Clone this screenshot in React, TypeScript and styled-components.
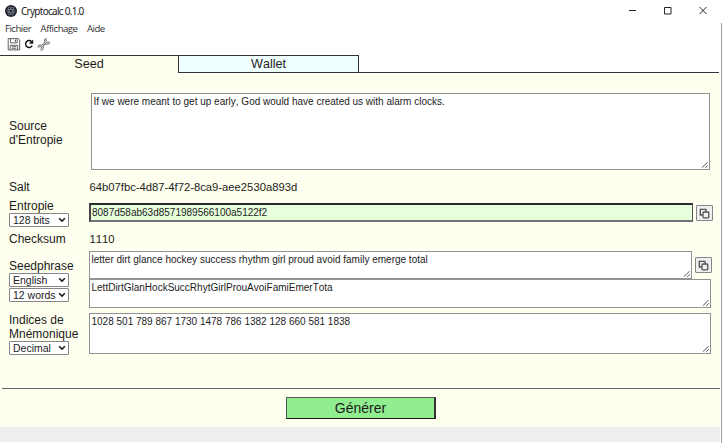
import React from "react";
import styled, { createGlobalStyle } from "styled-components";

const Global = createGlobalStyle`
  * { box-sizing: border-box; }
  body { margin: 0; background: #fff; color: #1c1c1c; font-family: "Liberation Sans", Arial, sans-serif; font-kerning: none; }
`;

const Window = styled.div`
  width: 722px;
  height: 443px;
  display: flex;
  flex-direction: column;
  background: linear-gradient(#9c9ca0, #9c9ca0) right 23px / 1px 420px no-repeat #fff;
  padding-right: 2px;
  overflow: hidden;
`;

const TitleBar = styled.header`
  height: 21px;
  display: flex;
  align-items: center;
  justify-content: space-between;
  padding: 0 13px 0 5px;
  font: 10px/20px "Noto Sans", "Open Sans", sans-serif;
`;

const Title = styled.div`
  display: flex;
  align-items: center;
  gap: 4px;
  letter-spacing: -0.73px;
  height: 20px;
`;

const WindowControls = styled.div`
  display: flex;
  gap: 27px;
  svg { display: block; }
`;

const MenuBar = styled.nav`
  height: 16px;
  display: flex;
  gap: 9.5px;
  padding-left: 5px;
  font: 9.6px/16px "Open Sans", "Noto Sans", sans-serif;
  letter-spacing: -0.5px;
  color: #333;
`;

const ToolBar = styled.div`
  height: 18px;
  display: flex;
  gap: 2px;
  padding: 1px 0 0 7px;
`;

const Tabs = styled.div`
  height: 18px;
  display: grid;
  grid-template-columns: 178px 181px 1fr;
  grid-template-rows: 18px;
  font-size: 12.6px;
  line-height: 16px;
  text-align: center;
`;

const Tab = styled.div<{ $active?: boolean }>`
  border-top: 1px solid #333338;
  background: ${(p) => (p.$active ? "#ffffef" : "#f0ffff")};
  border-left: ${(p) => (p.$active ? "0" : "1px solid #333338")};
  border-right: ${(p) => (p.$active ? "0" : "1px solid #333338")};
  border-bottom: ${(p) => (p.$active ? "0" : "1px solid #333338")};
`;

const TabRest = styled.div`
  border-bottom: 1px solid #333338;
  margin-right: 1px;
`;

const Panel = styled.main`
  flex: 0 0 315px;
  background: #ffffef;
  padding: 20px 8px 0 9px;
`;

const Row = styled.div<{ $h: number }>`
  height: ${(p) => p.$h}px;
  display: grid;
  grid-template-columns: 80px 1fr;
`;

const Label = styled.div<{ $top?: number }>`
  margin-top: ${(p) => p.$top ?? 0}px;
  font-size: 12px;
  line-height: 14px;
`;

const Value = styled.div`
  font-size: 11.25px;
  line-height: 16px;
  padding-left: 0.5px;
`;

const Fields = styled.div`
  display: flex;
  flex-direction: column;
  align-items: flex-start;
`;

const FieldLine = styled.div<{ $gap: number }>`
  display: flex;
  align-items: flex-start;
  gap: ${(p) => p.$gap}px;
`;

const Area = styled.div<{ $w: number; $h: number; $inset?: number }>`
  position: relative;
  width: ${(p) => p.$w}px;
  height: ${(p) => p.$h}px;
  margin-left: ${(p) => p.$inset ?? 0}px;
  border: 1px solid #929295;
  background: #fff;
  padding: 1.5px 1.5px;
  font-size: 10px;
  line-height: 12px;
  white-space: nowrap;
`;

const EntropyInput = styled.div`
  width: 604px;
  height: 19px;
  border: 1px solid #555558;
  border-top: 2px solid #29292d;
  border-left: 2px solid #444448;
  border-bottom: 2px solid #737373;
  background: #e8ffdc;
  font-size: 10px;
  line-height: 15px;
  padding-left: 1px;
`;

const Grip = styled.svg`
  position: absolute;
  right: 0;
  bottom: 0;
`;

const SelectBox = styled.div`
  width: 60px;
  height: 14px;
  display: flex;
  align-items: center;
  justify-content: space-between;
  border: 1px solid #85858a;
  border-radius: 1px;
  background: #fff;
  font-size: 10.5px;
  line-height: 12px;
  padding: 0 2px 0 3px;
  white-space: nowrap;
  & + & { margin-top: 1px; }
`;

const CopyBox = styled.div<{ $top: number }>`
  width: 17px;
  height: 16px;
  margin-top: ${(p) => p.$top}px;
  border: 1px solid #85858a;
  border-radius: 1px;
  background: #efefef;
  display: grid;
  place-items: center;
`;

const Footer = styled.footer`
  flex: 0 0 39px;
  background: #ffffef;
  display: flex;
  flex-direction: column;
  align-items: center;
  padding-left: 2px;
`;

const Rule = styled.div`
  width: 718px;
  height: 1px;
  background: #62656a;
`;

const Generate = styled.div`
  width: 150px;
  height: 22px;
  margin-top: 8px;
  border: 1px solid #555;
  border-right: 2px solid #333;
  border-bottom: 1px solid #161616;
  background: #90ee90;
  font-size: 14px;
  line-height: 21px;
  text-align: center;
`;

const StatusBar = styled.div`
  flex: 0 0 15px;
  background: #eee;
`;

const ElectronIcon = () => (
  <svg width="12" height="12" viewBox="0 0 12 12">
    <circle cx="6" cy="6" r="6" fill="#22242e" />
    <g fill="none" stroke="#899aa5" strokeWidth=".55">
      <ellipse cx="6" cy="6" rx="4.4" ry="1.7" />
      <ellipse cx="6" cy="6" rx="4.4" ry="1.7" transform="rotate(60 6 6)" />
      <ellipse cx="6" cy="6" rx="4.4" ry="1.7" transform="rotate(120 6 6)" />
    </g>
  </svg>
);

const SaveIcon = () => (
  <svg width="14" height="13" viewBox="0 0 14 13" fill="none" stroke="#555" strokeWidth=".9">
    <path d="M1.2.6h10.2l1.3 1.2v10.1H1.2zM3.6.6v4.2h6.6V.6M3.2 11.9V7.3h7.5v4.6M4.7 8.7h4.6M4.7 10.3h4.6" />
    <path d="M8.4 1.6v2" strokeWidth="1.3" />
  </svg>
);

const ReloadIcon = () => (
  <svg width="12" height="13" viewBox="0 0 12 13" fill="none" stroke="#171717" strokeWidth="1.5">
    <path d="M8.7 3.7A3.5 3.5 0 1 0 9.2 7.7" />
    <path d="M10.2 1.5v4.3H5.9z" fill="#171717" stroke="none" />
  </svg>
);

const wrenchPath =
  "M10 1.5A1.9 1.9 0 1 0 11.9 3.4M8.5 4.9L5.1 8.1M3.6 11.5A1.9 1.9 0 1 0 1.7 9.6";

const WrenchIcon = () => (
  <svg width="14" height="13" viewBox="0 0 14 13" fill="none">
    <path d={wrenchPath} stroke="#686868" strokeWidth="2.4" />
    <path d={wrenchPath} stroke="#eee" strokeWidth=".9" />
  </svg>
);

const CopyIcon = () => (
  <svg width="11" height="11" viewBox="0 0 11 11" fill="none" stroke="#505050" strokeWidth="1.3">
    <path d="M3.7 7H1.3V1.3H7v2.4" />
    <rect x="4" y="4" width="5.8" height="5.8" rx="1" />
  </svg>
);

const CopyButton = ({ top }: { top: number }) => (
  <CopyBox $top={top}><CopyIcon /></CopyBox>
);

const Select = ({ children }: { children: React.ReactNode }) => (
  <SelectBox>
    {children}
    <svg width="8" height="6" viewBox="0 0 8 6" fill="none" stroke="#151515" strokeWidth="1.6">
      <path d="M1.2 1.2L4 4.2l2.8-3" />
    </svg>
  </SelectBox>
);

const TextArea = ({ w, h, inset, children }: { w: number; h: number; inset?: number; children: React.ReactNode }) => (
  <Area $w={w} $h={h} $inset={inset}>
    {children}
    <Grip width="8" height="8" viewBox="0 0 8 8" fill="none" stroke="#505050" strokeWidth="1">
      <path d="M1 6.7L6.5 1.2M4.2 6.9L6.8 4.3" />
    </Grip>
  </Area>
);

export default function App() {
  return (
    <>
      <Global />
      <Window>
        <TitleBar>
          <Title><ElectronIcon />Cryptocalc 0.1.0</Title>
          <WindowControls>
            <svg width="8" height="9" viewBox="0 0 8 9"><path d="M0 4.5h7" stroke="#222" /></svg>
            <svg width="8" height="9" viewBox="0 0 8 9"><path d="M.5 1.5h6.5v6.5H.5z" fill="none" stroke="#222" /></svg>
            <svg width="8" height="9" viewBox="0 0 8 9"><path d="M.5 1l7 7M7.5 1l-7 7" stroke="#222" /></svg>
          </WindowControls>
        </TitleBar>
        <MenuBar><span>Fichier</span><span>Affichage</span><span>Aide</span></MenuBar>
        <ToolBar><SaveIcon /><ReloadIcon /><WrenchIcon /></ToolBar>
        <Tabs>
          <Tab $active>Seed</Tab>
          <Tab>Wallet</Tab>
          <TabRest />
        </Tabs>
        <Panel>
          <Row $h={86}>
            <Label $top={26}>Source<br />d'Entropie</Label>
            <Fields><TextArea w={619} h={77} inset={2}>If we were meant to get up early, God would have created us with alarm clocks.</TextArea></Fields>
          </Row>
          <Row $h={24}>
            <Label $top={1}>Salt</Label>
            <Value>64b07fbc-4d87-4f72-8ca9-aee2530a893d</Value>
          </Row>
          <Row $h={28}>
            <Label $top={-4}>Entropie<Select>128 bits</Select></Label>
            <FieldLine $gap={3}>
              <EntropyInput>8087d58ab63d8571989566100a5122f2</EntropyInput>
              <CopyButton top={2} />
            </FieldLine>
          </Row>
          <Row $h={20}>
            <Label $top={1}>Checksum</Label>
            <Value>1110</Value>
          </Row>
          <Row $h={62}>
            <Label $top={8}>Seedphrase<Select>English</Select><Select>12 words</Select></Label>
            <Fields>
              <FieldLine $gap={3}>
                <TextArea w={603} h={28}>letter dirt glance hockey success rhythm girl proud avoid family emerge total</TextArea>
                <CopyButton top={6} />
              </FieldLine>
              <TextArea w={622} h={29}>LettDirtGlanHockSuccRhytGirlProuAvoiFamiEmerTota</TextArea>
            </Fields>
          </Row>
          <Row $h={41}>
            <Label>Indices de<br />Mnémonique<Select>Decimal</Select></Label>
            <Fields><TextArea w={622} h={41}>1028 501 789 867 1730 1478 786 1382 128 660 581 1838</TextArea></Fields>
          </Row>
        </Panel>
        <Footer>
          <Rule />
          <Generate>Générer</Generate>
        </Footer>
        <StatusBar />
      </Window>
    </>
  );
}
